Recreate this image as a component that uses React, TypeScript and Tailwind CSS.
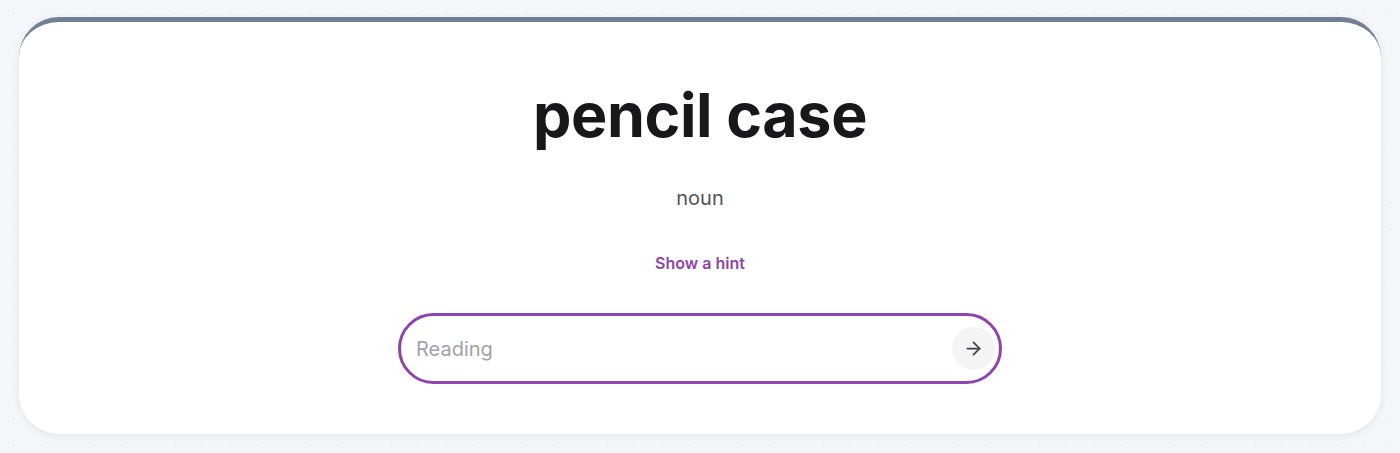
import React from "react";

export default function App() {
  return (
    <div
      className="min-h-[453px] w-full bg-[#f5f6f9] bg-[radial-gradient(#eceef2_1px,transparent_1.2px)] bg-[size:27px_27px] px-[19px] pt-[17px] pb-[18px]"
      style={{ fontFamily: "Inter, 'Noto Sans', sans-serif" }}
    >
      <div className="flex flex-col items-center rounded-[40px] border-t-[5px] border-[#718096] bg-white pt-[63px] pb-[50px] shadow-[0_2px_10px_rgba(15,23,42,0.08)]">
        <h1 className="text-[61px] font-bold leading-none tracking-[-0.4px] text-[#18181b]">
          pencil case
        </h1>
        <div className="mt-[38px] text-xl leading-7 text-[#52525b]">noun</div>
        <button className="mt-[39px] text-base font-semibold leading-6 text-[#8e44ad]">
          Show a hint
        </button>
        <div className="mt-[38px] flex h-[71px] w-[604px] items-center rounded-full border-[3px] border-[#8e44ad] bg-white pl-[15px] pr-[4px]">
          <input
            className="flex-1 bg-transparent text-xl text-[#27272a] outline-none placeholder:text-[#a1a1aa]"
            placeholder="Reading"
          />
          <button className="flex h-[43px] w-[43px] items-center justify-center rounded-full bg-[#f4f4f5] text-[#3f3f46]">
            <svg width="21" height="21" viewBox="0 0 24 24" fill="none" stroke="currentColor" strokeWidth="2" strokeLinecap="round" strokeLinejoin="round">
              <path d="M5 12h14" />
              <path d="m12 5 7 7-7 7" />
            </svg>
          </button>
        </div>
      </div>
    </div>
  );
}
